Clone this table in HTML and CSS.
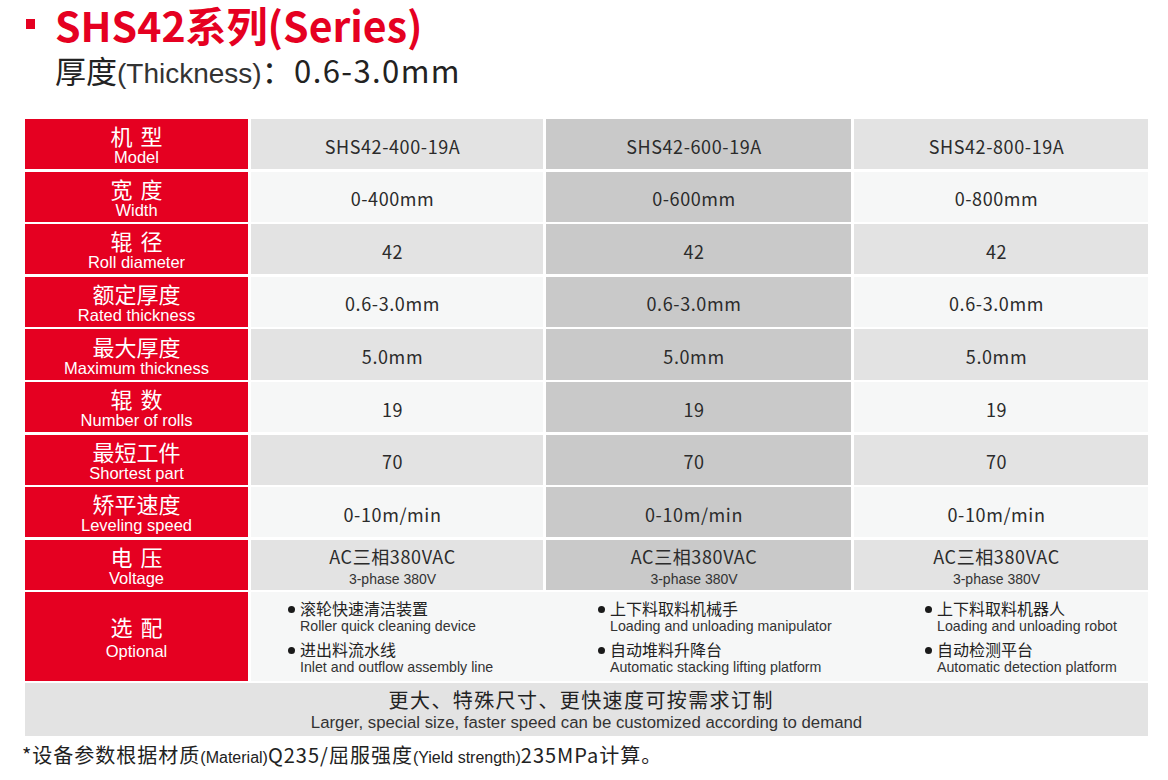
FILE: index.html
```html
<!DOCTYPE html>
<html lang="zh">
<head>
<meta charset="utf-8">
<title>SHS42系列</title>
<link rel="stylesheet" href="styles.css">
</head>
<body>
<div class="page">
  <header class="head">
    <h1 class="title"><span class="sq"></span><span class="t-txt">SHS42系列(Series)</span></h1>
    <p class="sub">厚度<span class="sub-en">(Thickness)</span><span class="sub-num">：0.6-3.0mm</span></p>
  </header>

  <div class="spec">
    <div class="lab"><span class="zh">机 型</span><span class="en">Model</span></div>
    <div class="cell dk">SHS42-400-19A</div>
    <div class="cell mid">SHS42-600-19A</div>
    <div class="cell dk">SHS42-800-19A</div>

    <div class="lab"><span class="zh">宽 度</span><span class="en">Width</span></div>
    <div class="cell lt">0-400mm</div>
    <div class="cell mid">0-600mm</div>
    <div class="cell lt">0-800mm</div>

    <div class="lab"><span class="zh">辊 径</span><span class="en">Roll diameter</span></div>
    <div class="cell dk">42</div>
    <div class="cell mid">42</div>
    <div class="cell dk">42</div>

    <div class="lab"><span class="zh">额定厚度</span><span class="en">Rated thickness</span></div>
    <div class="cell lt">0.6-3.0mm</div>
    <div class="cell mid">0.6-3.0mm</div>
    <div class="cell lt">0.6-3.0mm</div>

    <div class="lab"><span class="zh">最大厚度</span><span class="en">Maximum thickness</span></div>
    <div class="cell dk">5.0mm</div>
    <div class="cell mid">5.0mm</div>
    <div class="cell dk">5.0mm</div>

    <div class="lab"><span class="zh">辊 数</span><span class="en">Number of rolls</span></div>
    <div class="cell lt">19</div>
    <div class="cell mid">19</div>
    <div class="cell lt">19</div>

    <div class="lab"><span class="zh">最短工件</span><span class="en">Shortest part</span></div>
    <div class="cell dk">70</div>
    <div class="cell mid">70</div>
    <div class="cell dk">70</div>

    <div class="lab"><span class="zh">矫平速度</span><span class="en">Leveling speed</span></div>
    <div class="cell lt">0-10m/min</div>
    <div class="cell mid">0-10m/min</div>
    <div class="cell lt">0-10m/min</div>

    <div class="lab"><span class="zh">电 压</span><span class="en">Voltage</span></div>
    <div class="cell dk volt"><span class="v-zh">AC三相380VAC</span><span class="v-en">3-phase 380V</span></div>
    <div class="cell mid volt"><span class="v-zh">AC三相380VAC</span><span class="v-en">3-phase 380V</span></div>
    <div class="cell dk volt"><span class="v-zh">AC三相380VAC</span><span class="v-en">3-phase 380V</span></div>

    <div class="lab opt-lab"><span class="zh">选 配</span><span class="en">Optional</span></div>
    <div class="opt">
      <ul class="opt-col c2">
        <li><span class="o-zh">滚轮快速清洁装置</span><span class="o-en">Roller quick cleaning device</span></li>
        <li><span class="o-zh">进出料流水线</span><span class="o-en">Inlet and outflow assembly line</span></li>
      </ul>
      <ul class="opt-col c3">
        <li><span class="o-zh">上下料取料机械手</span><span class="o-en">Loading and unloading manipulator</span></li>
        <li><span class="o-zh">自动堆料升降台</span><span class="o-en">Automatic stacking lifting platform</span></li>
      </ul>
      <ul class="opt-col c4">
        <li><span class="o-zh">上下料取料机器人</span><span class="o-en">Loading and unloading robot</span></li>
        <li><span class="o-zh">自动检测平台</span><span class="o-en">Automatic detection platform</span></li>
      </ul>
    </div>

    <div class="foot">
      <span class="f-zh">更大、特殊尺寸、更快速度可按需求订制</span>
      <span class="f-en">Larger, special size, faster speed can be customized according to demand</span>
    </div>
  </div>

  <p class="note">*设备参数根据材质<span class="n-en">(Material)</span>Q235/屈服强度<span class="n-en">(Yield strength)</span>235MPa计算。</p>
</div>
</body>
</html>
```

FILE: styles.css
```css
* { box-sizing: border-box; }

html, body {
  margin: 0;
  padding: 0;
  background: #ffffff;
}

.page {
  width: 1168px;
  height: 780px;
  padding: 0 0 0 25px;
  font-family: "Noto Sans CJK SC", "Noto Sans", sans-serif;
  color: #2b2b2b;
  overflow: hidden;
}

.head {
  height: 119px;
  padding-top: 2px;
}

.title {
  display: flex;
  align-items: center;
  margin: 0;
  height: 48px;
  font-size: 41px;
  line-height: 48px;
  font-weight: 700;
  color: #e50021;
}

.sq {
  flex: 0 0 auto;
  display: block;
  width: 9px;
  height: 10px;
  background: #e50021;
  margin: 0 20px 0 1px;
  position: relative;
  top: -2px;
}

.t-txt {
  white-space: nowrap;
  position: relative;
  top: -2px;
}

.sub {
  margin: -2px 0 0 30px;
  font-size: 31px;
  line-height: 44px;
  color: #222;
  white-space: nowrap;
}

.sub-en {
  font-family: "Liberation Sans", Arial, sans-serif;
  font-size: 28px;
  font-weight: 400;
  color: #333;
}

.sub-num {
  letter-spacing: 1.4px;
}

.spec {
  display: grid;
  grid-template-columns: 223px 292px 305px 294px;
  grid-template-rows: repeat(9, 50.3px) 88.6px 52.7px;
  column-gap: 3px;
  row-gap: 2.3px;
  width: 1123px;
}

.lab {
  background: #e50021;
  color: #ffffff;
  display: flex;
  flex-direction: column;
  align-items: center;
  justify-content: center;
  padding-top: 0;
}

.lab .zh {
  font-size: 22px;
  line-height: 26px;
  white-space: pre;
  word-spacing: 3px;
}

.lab .en {
  font-family: "Liberation Sans", Arial, sans-serif;
  font-size: 16.5px;
  line-height: 18px;
}

.opt-lab .zh { line-height: 28px; }
.opt-lab .en { line-height: 22px; }

.cell {
  display: flex;
  flex-direction: column;
  align-items: center;
  justify-content: center;
  font-size: 18px;
  letter-spacing: 0.6px;
  color: #2b2b2b;
  padding: 3px 9px 0 0;
}

.dk { background: #e3e3e3; }
.lt { background: #f6f7f7; }
.mid { background: #c9c9c9; }

.volt { padding-top: 6px; }

.volt .v-zh {
  font-size: 18px;
  line-height: 24px;
}

.volt .v-en {
  font-family: "Liberation Sans", Arial, sans-serif;
  font-size: 14px;
  line-height: 23px;
  letter-spacing: 0;
  color: #333;
}

.opt {
  grid-column: 2 / 5;
  background: #f6f7f7;
  display: grid;
  grid-template-columns: 295px 308px 297px;
  align-items: center;
}

.opt-col {
  list-style: none;
  margin: 0;
  padding: 0;
  display: flex;
  flex-direction: column;
  gap: 4px;
}

.c2 { padding-left: 37px; }
.c3 { padding-left: 52px; }
.c4 { padding-left: 71px; }

.opt-col li {
  display: flex;
  flex-direction: column;
  position: relative;
  padding-left: 12px;
}

.opt-col li::before {
  content: "";
  position: absolute;
  left: 0;
  top: 8px;
  width: 7px;
  height: 7px;
  border-radius: 50%;
  background: #1a1a1a;
}

.o-zh {
  font-size: 16px;
  line-height: 20px;
  color: #222;
}

.o-en {
  font-family: "Liberation Sans", Arial, sans-serif;
  font-size: 14.2px;
  line-height: 17px;
  color: #333;
}

.foot {
  grid-column: 1 / 5;
  background: #e3e3e3;
  display: flex;
  flex-direction: column;
  align-items: center;
  justify-content: center;
  padding-top: 2px;
}

.f-zh {
  font-size: 20px;
  line-height: 24px;
  letter-spacing: 1.4px;
  margin-right: -1.4px;
  color: #222;
  position: relative;
  left: -6px;
}

.f-en {
  font-family: "Liberation Sans", Arial, sans-serif;
  font-size: 16.8px;
  line-height: 22px;
  color: #333;
}

.note {
  margin: 6px 0 0 -3px;
  font-size: 20px;
  line-height: 26px;
  letter-spacing: 1px;
  color: #222;
}

.n-en {
  font-family: "Liberation Sans", Arial, sans-serif;
  font-size: 16px;
  letter-spacing: 0;
}
```
